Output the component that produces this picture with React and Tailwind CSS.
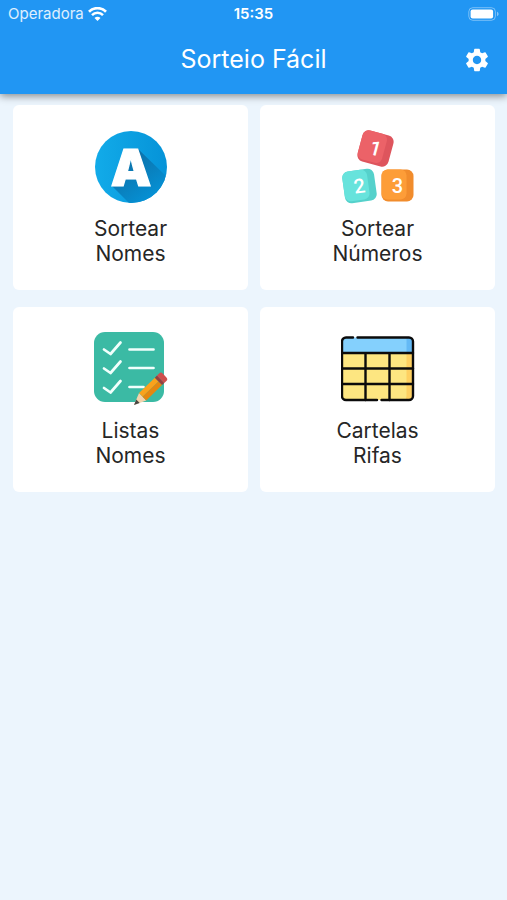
import React from 'react';
import { MdSettings } from 'react-icons/md';

const WifiIcon = () => (
  <svg viewBox="0 0 19 14" className="w-[19px] h-[14px]" fill="none" stroke="#fff" aria-hidden="true">
    <path d="M1 4.700a12 12 0 0 1 17 0" strokeWidth="2.700" />
    <path d="M4 8.100a7.700 7.700 0 0 1 11 0" strokeWidth="2.500" />
    <path d="M9.500 14 6.500 11a4.200 4.200 0 0 1 6 0z" fill="#fff" stroke="none" />
  </svg>
);

const BatteryIcon = () => (
  <svg viewBox="0 0 31 14" className="w-[31px] h-[14px]" aria-hidden="true">
    <rect x="0.8" y="0.7" width="26.6" height="12.6" rx="4" fill="none" stroke="#fff" strokeOpacity="0.4" />
    <rect x="2.6" y="2.4" width="22.5" height="9.2" rx="2" fill="#fff" />
    <path d="M29 4.8c1 .4 1.6 1.200 1.600 2.200s-.6 1.800-1.600 2.200z" fill="#fff" fillOpacity="0.45" />
  </svg>
);

const LetterIcon = () => (
  <svg viewBox="0 0 74 74" className="w-[74px] h-[74px]" aria-hidden="true">
    <defs>
      <linearGradient id="disc" x1="0" y1="0" x2="1" y2="0">
        <stop offset="0" stopColor="#12abe9" />
        <stop offset="1" stopColor="#0593d8" />
      </linearGradient>
      <linearGradient id="shade" x1="0.3" y1="0.2" x2="0.8" y2="0.9">
        <stop offset="0" stopColor="#0c72aa" />
        <stop offset="1" stopColor="#0593d8" />
      </linearGradient>
      <clipPath id="discClip">
        <circle cx="37" cy="37" r="36" />
      </clipPath>
    </defs>
    <circle cx="37" cy="37" r="36" fill="url(#disc)" />
    <g clipPath="url(#discClip)">
      <path d="M43 18 74 48V74H36L17.500 55.500 30 46z" fill="url(#shade)" />
    </g>
    <text x="37" y="55.500" textAnchor="middle" fontSize="51" fill="#fff" stroke="#fff" strokeWidth="1.200" className="font-['Inter',sans-serif] font-black">
      A
    </text>
  </svg>
);

const Cube = ({ x, y, turn, size, fill, side, digit }) => (
  <g transform={`translate(${x} ${y}) rotate(${turn})`}>
    <rect x={-size / 2} y={-size / 2} width={size} height={size} rx="6.5" fill={side} />
    <rect x={-size / 2} y={-size / 2} width={size - 7} height={size - 2} rx="6" fill={fill} />
    <text y="7" x="0" textAnchor="middle" fontSize="20" fill="#fff" className="font-['Roboto',sans-serif] font-medium">
      {digit}
    </text>
  </g>
);

const CubesIcon = () => (
  <svg viewBox="0 0 74 74" className="w-[74px] h-[74px]" aria-hidden="true">
    <Cube x={34.500} y={18.500} turn={15} size={32} fill="#ec6268" side="#de555d" digit="1" />
    <Cube x={18.500} y={56} turn={-8} size={32} fill="#67e3dc" side="#55d1cb" digit="2" />
    <Cube x={56.500} y={55.500} turn={0} size={32} fill="#fd9d38" side="#f18c2c" digit="3" />
  </svg>
);

const ChecklistIcon = () => (
  <svg viewBox="0 0 74 74" className="w-[74px] h-[74px]" aria-hidden="true">
    <rect x="0" y="0" width="70" height="70" rx="11" fill="#3bbaa4" />
    <g fill="none" stroke="#f1fffc" strokeWidth="2.700" strokeLinecap="round" strokeLinejoin="round">
      <path d="m10 17.500 6.500 4.500 10-11.500" />
      <path d="m10 36.500 6.500 4.500 10-11.500" />
      <path d="m10 56 6.500 4.500 10-11.500" />
      <path d="M35.500 17.500h24M35.500 36h24M35.500 55h14" />
    </g>
    {/* pencil, drawn upright with the tip at the bottom */}
    <g transform="translate(40 73) rotate(46)">
      <path d="M0 0-5.200-12H5.200z" fill="#f3d3ac" />
      <path d="M0 0-2.400-5.500H2.400z" fill="#4a4643" />
      <path d="M-5.200-12V-34H0V-12z" fill="#f9a21c" />
      <path d="M0-12V-34H5.200V-12z" fill="#e5870f" />
      <path d="M-5.200-34h10.400v-3h-10.400z" fill="#963f3f" />
      <path d="M-5.200-37h10.400v-3a2.500 2.500 0 0 0-2.500-2.500h-5.400a2.500 2.500 0 0 0-2.500 2.500z" fill="#cf4f4d" />
    </g>
  </svg>
);

const TableIcon = () => (
  <svg viewBox="0 0 74 74" className="w-[74px] h-[74px]" aria-hidden="true">
    <path d="M1 21h71v43a4 4 0 0 1-4 4h-63a4 4 0 0 1-4-4z" fill="#fde681" />
    <path d="M65.500 21H72v43a4 4 0 0 1-4 4H63.500q2-1 2-4z" fill="#fed061" />
    <path d="M1 21V9.500a4 4 0 0 1 4-4h63a4 4 0 0 1 4 4V21z" fill="#84d0fd" />
    <path d="M65.500 21V5.500H68a4 4 0 0 1 4 4V21z" fill="#64b9f5" />
    <g fill="none" stroke="#0b0b0b" strokeWidth="2.400" strokeLinecap="round">
      <path d="M12 5.500H5a4 4 0 0 0-4 4V64a4 4 0 0 0 4 4H36" />
      <path d="M16.500 5.500H68a4 4 0 0 1 4 4V64a4 4 0 0 1-4 4H40.500" />
      <path d="M1 21h71M1 36.500h71M1 52h71M24.500 21v47M48.500 21v47" />
    </g>
  </svg>
);

const menu = [
  { top: 'Sortear', bottom: 'Nomes', Icon: LetterIcon },
  { top: 'Sortear', bottom: 'Números', Icon: CubesIcon },
  { top: 'Listas', bottom: 'Nomes', Icon: ChecklistIcon },
  { top: 'Cartelas', bottom: 'Rifas', Icon: TableIcon },
];

const App = () => {
  return (
    <div className="min-h-screen bg-[#ecf5fd] font-['Inter',sans-serif]">
      <header className="bg-[#2196f3] text-white shadow-[0_2px_8px_rgba(0,0,0,0.45)]">
        <div className="grid grid-cols-3 items-center h-7 px-2 text-[15px]">
          <div className="flex items-center gap-1 text-white/85">
            <span>Operadora</span>
            <WifiIcon />
          </div>
          <span className="text-center font-semibold">15:35</span>
          <div className="flex justify-end">
            <BatteryIcon />
          </div>
        </div>
        <div className="grid grid-cols-[48px_1fr_48px] items-center h-[66px] pb-0.5 px-1.5">
          <h1 className="col-start-2 text-center text-[25px]">Sorteio Fácil</h1>
          <button type="button" aria-label="Configurações" className="flex justify-center">
            <MdSettings className="size-7" />
          </button>
        </div>
      </header>

      <main className="grid grid-cols-2 gap-x-3 gap-y-[17px] pt-[11px] pl-[13px] pr-3">
        {menu.map(({ top, bottom, Icon }) => (
          <button
            key={`${top} ${bottom}`}
            type="button"
            className="flex flex-col items-center gap-3 pt-[25px] pb-6 bg-white rounded-md text-[21px] leading-[25px] text-[#262626]"
          >
            <Icon />
            <span>
              {top}
              <br />
              {bottom}
            </span>
          </button>
        ))}
      </main>
    </div>
  );
};

export default App;
